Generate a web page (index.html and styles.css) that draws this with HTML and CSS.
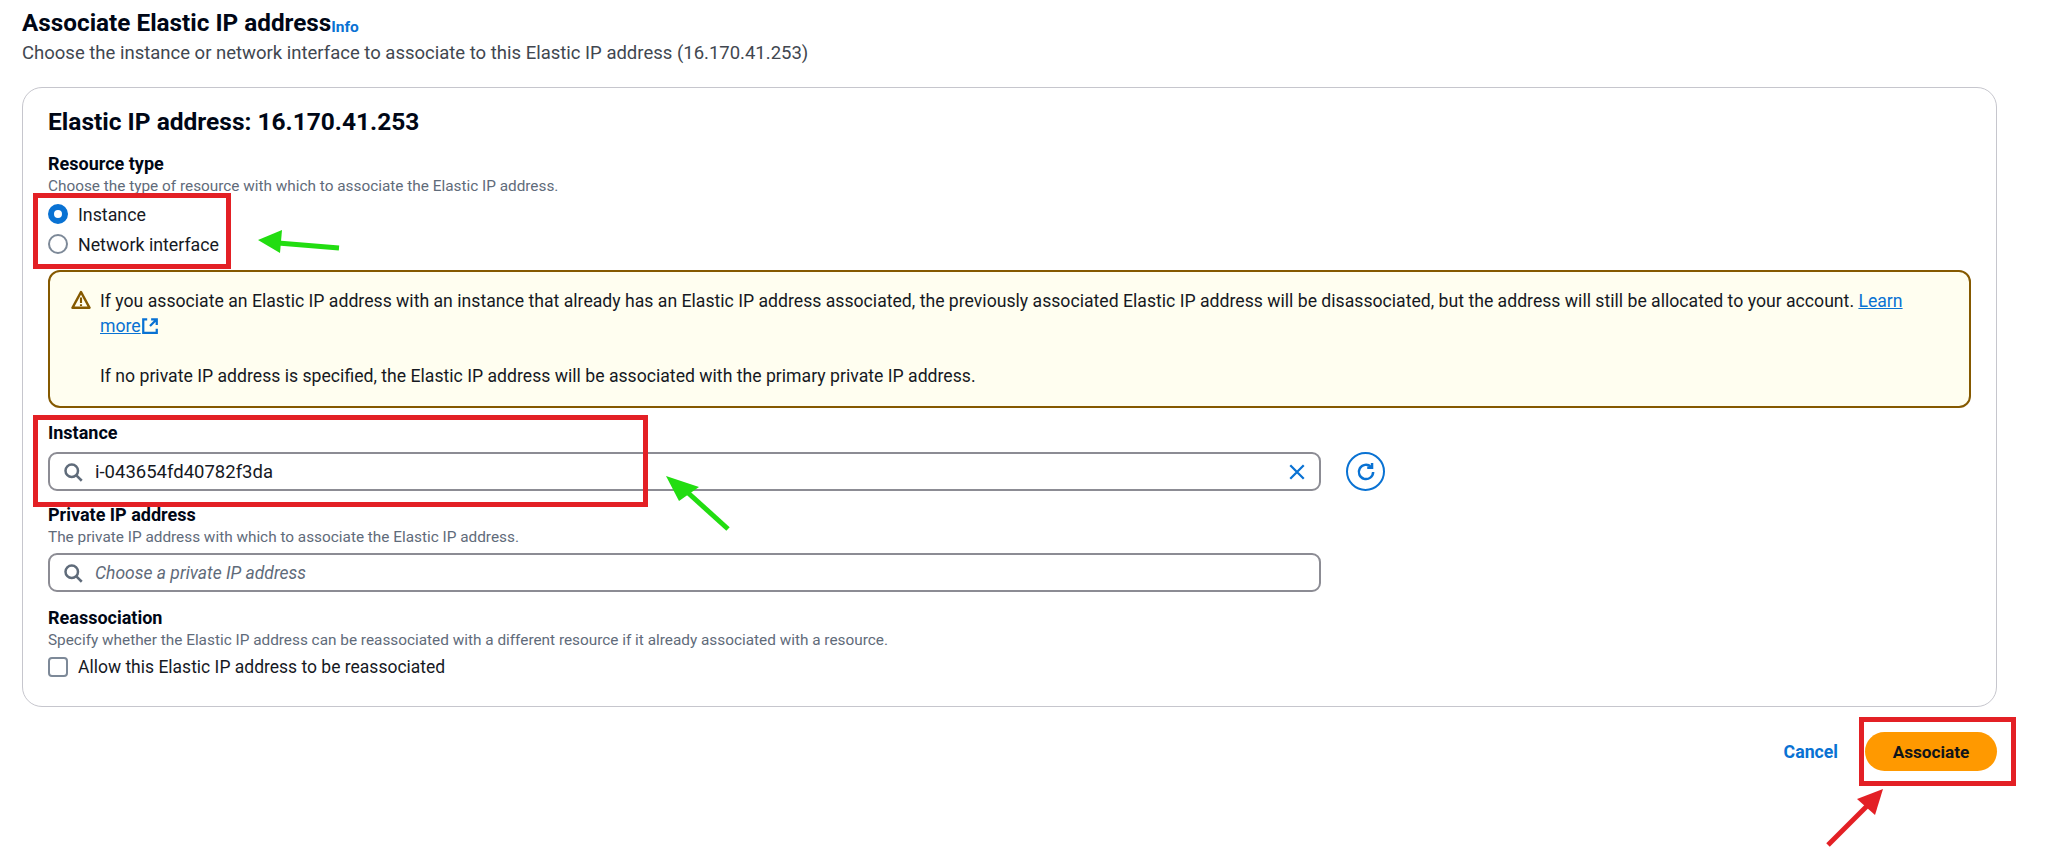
FILE: index.html
```html
<!DOCTYPE html>
<html lang="en">
<head>
  <meta charset="UTF-8">
  <title>Associate Elastic IP address</title>
  <link rel="stylesheet" href="styles.css">
</head>
<body>
  <div class="page">
    <div class="page-head">
      <h1>Associate Elastic IP address<a class="info" href="#">Info</a></h1>
      <p class="page-desc">Choose the instance or network interface to associate to this Elastic IP address (16.170.41.253)</p>
    </div>

    <div class="card">
      <h2>Elastic IP address: 16.170.41.253</h2>

      <div class="label label-first">Resource type</div>
      <div class="hint">Choose the type of resource with which to associate the Elastic IP address.</div>
      <div class="radios">
        <div class="radio-row"><span class="radio radio-on"></span>Instance</div>
        <div class="radio-row"><span class="radio"></span>Network interface</div>
      </div>

      <div class="alert">
        <svg class="alert-icon" viewBox="0 0 16 16" width="20" height="20">
          <path d="M8 1.6 14.8 14.2H1.2Z" fill="none" stroke="#855900" stroke-width="2" stroke-linejoin="round"/>
          <path d="M8 6v4.4M8 11.4v1.4" fill="none" stroke="#855900" stroke-width="1.7"/>
        </svg>
        <div class="alert-text">
          <p>If you associate an Elastic IP address with an instance that already has an Elastic IP address associated, the previously associated Elastic IP address will be disassociated, but the address will still be allocated to your account. <a href="#">Learn more</a><svg class="ext" viewBox="0 0 16 16" width="18" height="18">
            <path d="M5.5 2H2v12h12v-3.5M9 2h5v5M14 2 8 8" fill="none" stroke="#0972d3" stroke-width="2"/>
          </svg></p>
          <p>If no private IP address is specified, the Elastic IP address will be associated with the primary private IP address.</p>
        </div>
      </div>

      <div class="label label-instance">Instance</div>
      <div class="field-row">
        <div class="input">
          <svg class="search" viewBox="0 0 16 16" width="20" height="20">
            <circle cx="7" cy="7" r="5" fill="none" stroke="#5f6b7a" stroke-width="2"/>
            <path d="M10.5 10.5 15 15" fill="none" stroke="#5f6b7a" stroke-width="2"/>
          </svg>
          <span class="input-value">i-043654fd40782f3da</span>
          <svg class="clear" viewBox="0 0 16 16" width="18" height="18">
            <path d="M2 2 14 14M14 2 2 14" fill="none" stroke="#0972d3" stroke-width="2"/>
          </svg>
        </div>
        <button class="refresh" type="button">
          <svg viewBox="0 0 16 16" width="22" height="22">
            <path d="M13.2 8A5.2 5.2 0 1 1 11.6 4.2" fill="none" stroke="#0972d3" stroke-width="1.8"/>
            <path d="M12.4 1.4V4.9H8.9" fill="none" stroke="#0972d3" stroke-width="1.8"/>
          </svg>
        </button>
      </div>

      <div class="label label-private">Private IP address</div>
      <div class="hint">The private IP address with which to associate the Elastic IP address.</div>
      <div class="input input-private">
        <svg class="search" viewBox="0 0 16 16" width="20" height="20">
          <circle cx="7" cy="7" r="5" fill="none" stroke="#5f6b7a" stroke-width="2"/>
          <path d="M10.5 10.5 15 15" fill="none" stroke="#5f6b7a" stroke-width="2"/>
        </svg>
        <span class="input-placeholder">Choose a private IP address</span>
      </div>

      <div class="label label-reassoc">Reassociation</div>
      <div class="hint">Specify whether the Elastic IP address can be reassociated with a different resource if it already associated with a resource.</div>
      <div class="check-row"><span class="checkbox"></span>Allow this Elastic IP address to be reassociated</div>
    </div>

    <div class="actions">
      <a class="cancel" href="#">Cancel</a>
      <button class="primary" type="button">Associate</button>
    </div>
  </div>

  <!-- annotations drawn on top of the screenshot -->
  <svg class="marks" width="2067" height="849" viewBox="0 0 2067 849">
    <g fill="none" stroke="#e32025" stroke-width="5">
      <rect x="35.5" y="195.5" width="193" height="71"/>
      <rect x="35.5" y="417.5" width="610" height="87"/>
      <rect x="1861.5" y="719.5" width="152" height="64"/>
    </g>
    <path d="M339 248 278 243" fill="none" stroke="#22dd11" stroke-width="5"/>
    <path d="M258 240 282 230 280 253Z" fill="#22dd11"/>
    <path d="M728 529 686 491" fill="none" stroke="#22dd11" stroke-width="5"/>
    <path d="M666 476 699 487 679 501Z" fill="#22dd11"/>
    <path d="M1828 845 1870 803" fill="none" stroke="#e32025" stroke-width="5"/>
    <path d="M1883 789 1875 815 1857 799Z" fill="#e32025"/>
  </svg>
</body>
</html>
```

FILE: styles.css
```css
*{box-sizing:border-box;margin:0;padding:0;}
html,body{width:100%;height:100%;overflow:hidden;background:#fff;}
body{font-family:"Roboto","Liberation Sans",sans-serif;font-size:17.5px;color:#16191f;position:relative;}
a{color:#0972d3;}

.page{padding:7px 70px 0 22px;}
.page-head{height:80px;}
h1{font-size:24.3px;line-height:32px;font-weight:700;color:#000716;}
.info{font-size:15.5px;font-weight:700;text-decoration:none;vertical-align:-1px;}
.page-desc{font-size:18.5px;line-height:22px;color:#414750;margin-top:-1px;}

.card{border:1px solid #c6c6cd;border-radius:20px;height:620px;padding:19px 25px 0 25px;}
h2{font-size:24.5px;line-height:30px;font-weight:700;color:#000716;}

.label{font-size:18px;line-height:20px;font-weight:700;color:#000716;}
.label-first{margin-top:17px;}
.label-instance{margin-top:15px;}
.label-private{margin-top:14px;}
.label-reassoc{margin-top:16px;}
.hint{font-size:15.35px;line-height:18px;color:#5f6b7a;margin-top:3px;}

.radios{margin-top:4px;}
.radio-row{display:flex;align-items:center;gap:10px;height:30px;font-size:17.8px;}
.radio{width:20px;height:20px;border-radius:50%;border:2px solid #7d8998;background:#fff;}
.radio-on{border:6px solid #0972d3;}

.alert{display:flex;gap:9px;height:138px;margin-top:11px;padding:17px 52px 0 21px;background:#fffef0;border:2px solid #855900;border-radius:12px;}
.alert-icon{flex:none;margin-top:1px;}
.alert-text{font-size:17.65px;line-height:25px;}
.alert-text p+p{margin-top:25px;}
.alert-text a{color:#0972d3;}
.ext{vertical-align:-3px;}

.field-row{display:flex;align-items:center;gap:25px;margin-top:9px;}
.input{display:flex;align-items:center;width:1273px;height:39px;padding:0 13px 0 13px;border:2px solid #8c8c94;border-radius:9px;background:#fff;}
.input-private{margin-top:7px;}
.input-value{flex:1;margin-left:12px;font-size:18.5px;}
.input-placeholder{margin-left:12px;font-style:italic;color:#5f6b7a;}
.search,.clear{flex:none;}
.refresh{flex:none;display:flex;align-items:center;justify-content:center;width:39px;height:39px;border:2px solid #0972d3;border-radius:50%;background:#fff;}

.check-row{display:flex;align-items:center;gap:10px;height:30px;margin-top:3px;}
.checkbox{width:20px;height:20px;border:2px solid #7d8998;border-radius:4px;}

.actions{display:flex;align-items:center;justify-content:flex-end;gap:27px;margin-top:25px;}
.cancel{font-size:17.7px;font-weight:700;text-decoration:none;}
.primary{width:132px;height:39px;border:0;border-radius:20px;background:#ff9900;font:700 17.2px "Roboto","Liberation Sans",sans-serif;color:#0f141a;}

.marks{position:absolute;left:0;top:0;pointer-events:none;}
```
